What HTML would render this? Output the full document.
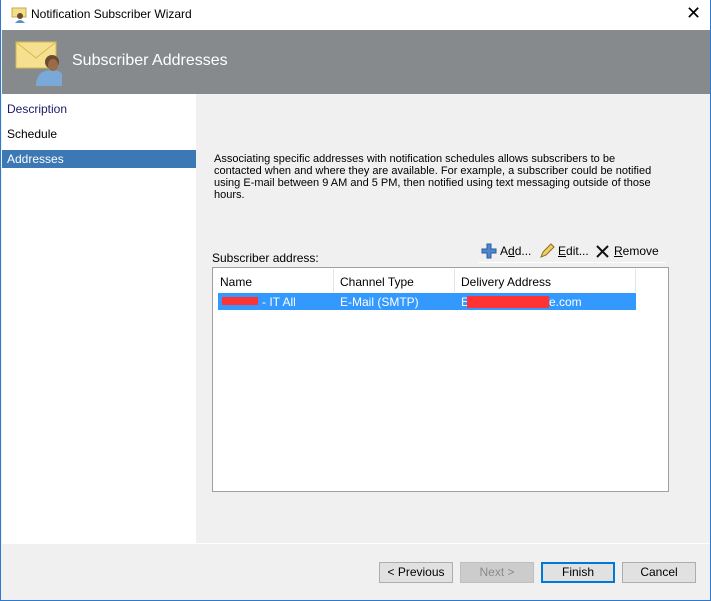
<!DOCTYPE html>
<html><head><style>
*{margin:0;padding:0;box-sizing:border-box}
body{width:711px;height:601px;position:relative;background:#f0f0f0;font-family:"Liberation Sans",Arial,sans-serif;font-size:12px;color:#000;overflow:hidden}
.a{position:absolute}
.btn{position:absolute;top:562px;height:21px;width:74px;border:1px solid #adadad;background:#e1e1e1;text-align:center;line-height:19px;font-size:12px}
</style></head><body>
<div class="a" style="left:0;top:0;width:711px;height:30px;background:#fff"></div>
<div class="a" style="left:0;top:0;width:1px;height:601px;background:#2b79d0"></div>
<div class="a" style="left:710px;top:0;width:1px;height:601px;background:#2b79d0"></div>
<div class="a" style="left:0;top:600px;width:711px;height:1px;background:#2b79d0"></div>
<svg class="a" style="left:10px;top:7px" width="18" height="16"><rect x="2" y="1" width="14" height="9" fill="#f3df8a" stroke="#c9a94a"/><circle cx="10" cy="9" r="3" fill="#6b4a2f"/><path d="M5 16 Q10 10 15 16Z" fill="#5b8fc9"/></svg>
<div class="a" style="left:31px;top:7px;font-size:12px">Notification Subscriber Wizard</div>
<div class="a" style="left:686px;top:3px;font-size:18px;font-weight:lighter">✕</div>
<div class="a" style="left:2px;top:30px;width:708px;height:64px;background:#878a8d"></div>
<svg class="a" style="left:12px;top:38px" width="50" height="48"><rect x="4" y="4" width="40" height="26" fill="#f5e08f" stroke="#d6b853"/><path d="M4 4 L24 20 L44 4" fill="none" stroke="#d6b853"/><path d="M24 48 Q24 32 40 32 Q54 32 54 48Z" fill="#7aa9d8"/><circle cx="40" cy="24" r="7" fill="#6b4a2f"/><ellipse cx="41" cy="27" rx="5" ry="6" fill="#9a6b48"/></svg>
<div class="a" style="left:72px;top:52px;font-size:16px;color:#fff">Subscriber Addresses</div>
<div class="a" style="left:2px;top:94px;width:194px;height:450px;background:#fff"></div>
<div class="a" style="left:7px;top:102px;color:#1a1a6a">Description</div>
<div class="a" style="left:7px;top:127px">Schedule</div>
<div class="a" style="left:2px;top:150px;width:194px;height:18px;background:#3b78b4"></div>
<div class="a" style="left:7px;top:152px;color:#fff">Addresses</div>
<div class="a" style="left:214px;top:153px;width:450px;line-height:12px;font-size:11px">Associating specific addresses with notification schedules allows subscribers to be<br>contacted when and where they are available. For example, a subscriber could be notified<br>using E-mail between 9 AM and 5 PM, then notified using text messaging outside of those<br>hours.</div>
<div class="a" style="left:212px;top:251px">Subscriber address:</div>
<svg class="a" style="left:481px;top:243px" width="16" height="16"><path d="M6 1h4v5h5v4h-5v5h-4v-5h-5v-4h5z" fill="#4f86cf" stroke="#2a5c9c"/></svg>
<div class="a" style="left:500px;top:244px">A<u>d</u>d...</div>
<svg class="a" style="left:539px;top:243px" width="16" height="16"><path d="M2 14 L4 9 L12 1 L15 4 L7 12Z" fill="#f0d060" stroke="#8a6a20"/></svg>
<div class="a" style="left:558px;top:244px"><u>E</u>dit...</div>
<svg class="a" style="left:595px;top:244px" width="15" height="15"><path d="M2 2L13 13M13 2L2 13" stroke="#111" stroke-width="2"/></svg>
<div class="a" style="left:614px;top:244px"><u>R</u>emove</div>
<div class="a" style="left:478px;top:262px;width:188px;height:1px;background:#fff"></div>
<div class="a" style="left:212px;top:267px;width:457px;height:225px;background:#fff;border:1px solid #a0a0a0"></div>
<div class="a" style="left:333px;top:269px;width:1px;height:23px;background:#e5e5e5"></div>
<div class="a" style="left:454px;top:269px;width:1px;height:23px;background:#e5e5e5"></div>
<div class="a" style="left:635px;top:269px;width:1px;height:23px;background:#e5e5e5"></div>
<div class="a" style="left:220px;top:275px">Name</div>
<div class="a" style="left:340px;top:275px">Channel Type</div>
<div class="a" style="left:461px;top:275px">Delivery Address</div>
<div class="a" style="left:218px;top:293px;width:418px;height:17px;background:#3399ff"></div>
<div class="a" style="left:222px;top:297px;width:36px;height:8px;background:#ff3333"></div>
<div class="a" style="left:262px;top:295px;color:#fff">- IT All</div>
<div class="a" style="left:340px;top:295px;color:#fff">E-Mail (SMTP)</div>
<div class="a" style="left:461px;top:295px;color:#fff">E</div>
<div class="a" style="left:467px;top:296px;width:82px;height:12px;background:#ff3333"></div>
<div class="a" style="left:549px;top:295px;color:#fff">e.com</div>
<div class="a" style="left:2px;top:543px;width:708px;height:1px;background:#fff"></div>
<div class="btn" style="left:379px">&lt; Previous</div>
<div class="btn" style="left:460px;background:#ccc;border-color:#bfbfbf;color:#8a8a8a">Next &gt;</div>
<div class="btn" style="left:541px;border:2px solid #0078d7;line-height:17px">Finish</div>
<div class="btn" style="left:622px">Cancel</div>
</body></html>
